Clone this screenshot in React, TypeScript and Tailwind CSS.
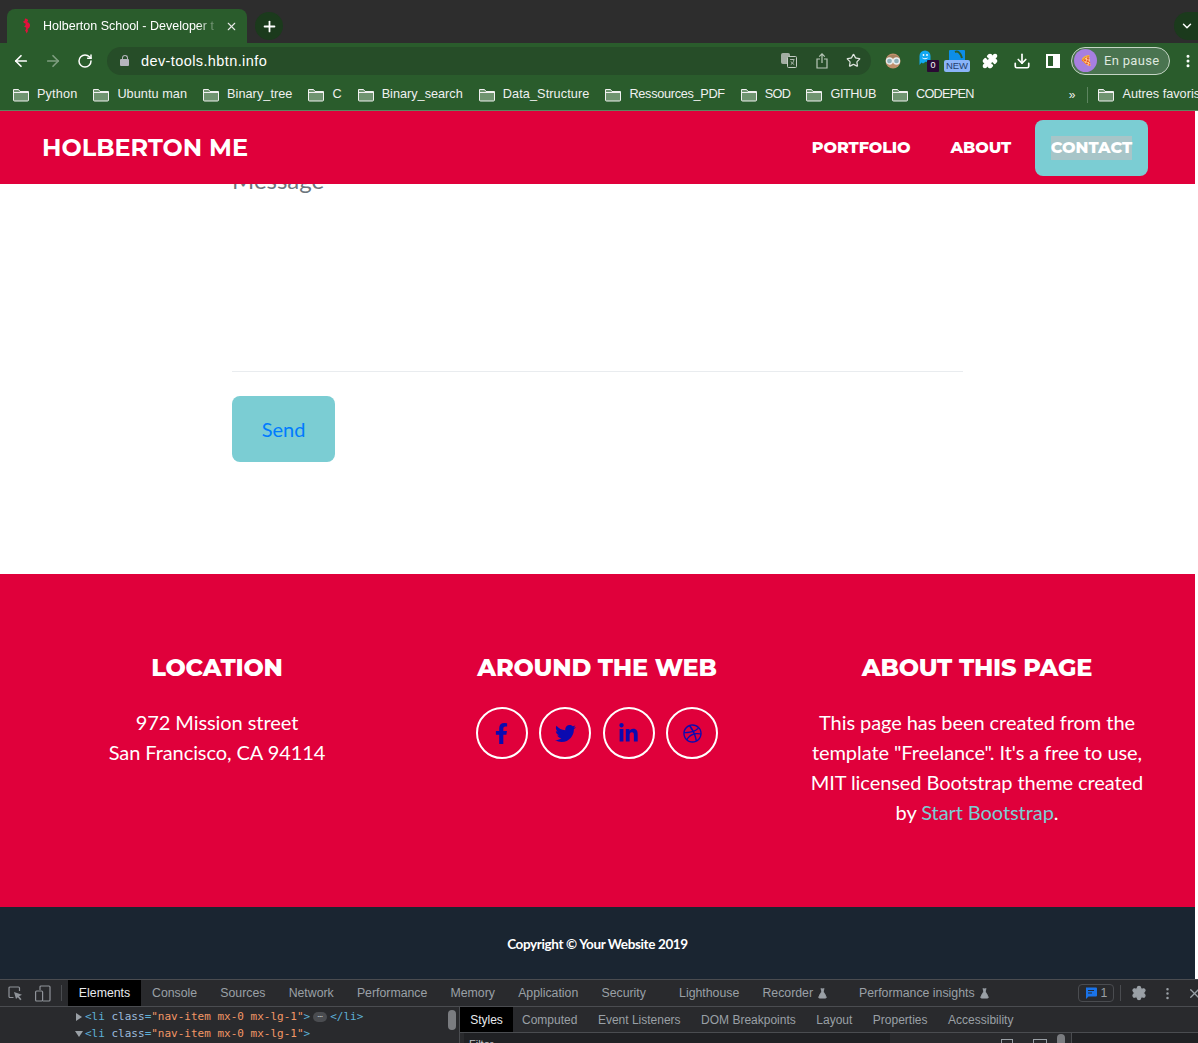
import { ArrowLeft, ArrowRight, RotateCw, Star, Plus, X, ChevronDown, Download, EllipsisVertical, Settings, FlaskConical, Puzzle } from "lucide-react";
import { FaFacebookF, FaTwitter, FaLinkedinIn, FaDribbble } from "react-icons/fa";

const BOOKMARKS = [
  { name: "Python", fit: "tracking-[0.15px]" },
  { name: "Ubuntu man", fit: "tracking-[0.05px]" },
  { name: "Binary_tree", fit: "tracking-[0.05px]" },
  { name: "C", fit: "" },
  { name: "Binary_search", fit: "" },
  { name: "Data_Structure", fit: "tracking-[0.1px]" },
  { name: "Ressources_PDF", fit: "tracking-[-0.3px]" },
  { name: "SOD", fit: "tracking-[-0.6px]" },
  { name: "GITHUB", fit: "tracking-[-0.4px]" },
  { name: "CODEPEN", fit: "tracking-[-0.7px]" },
];
const TOP_TABS = ["Console", "Sources", "Network", "Performance", "Memory", "Application"];
const SIDE_TABS = ["Computed", "Event Listeners", "DOM Breakpoints", "Layout", "Properties", "Accessibility"];
const SOCIAL = [FaFacebookF, FaTwitter, FaLinkedinIn, FaDribbble];

const MONTSERRAT = "font-['Montserrat','Inter',sans-serif] uppercase";
const FOOTER_HEADING = `${MONTSERRAT} font-extrabold text-[24px] leading-[29px] tracking-[-0.2px]`;

function BookmarkFolder() {
  return (
    <svg width="16" height="14" viewBox="0 0 16 14" className="shrink-0">
      <path d="M0.5 12V1.5h5l1.5 2h8.5V12a1 1 0 0 1-1 1h-13a1 1 0 0 1-1-1z" fill="#6f9470" stroke="#f0f0f0" />
      <path d="M0.5 4.5h15" stroke="#f0f0f0" />
    </svg>
  );
}

function Favicon() {
  return (
    <svg width="8" height="16" viewBox="0 0 8 16" className="shrink-0" fill="#e0103b">
      <path d="M2 0.5c2 0 3.5 1 3 2.5L4 4c2 0.5 3.5 2 3 4-0.3 1.500-1.500 2.500-2.500 3 0.800 1.500 0.500 3.500-1.500 4.500 0.500-1 0-2-1-3 1-1 1.500-2 1-3L1 8.500c1-0.500 2-1.500 1.500-3L1 5 0 3.500 1.500 3z" />
    </svg>
  );
}

function TranslateIcon() {
  return (
    <svg width="16" height="15" viewBox="0 0 16 15" className="ml-auto shrink-0">
      <rect x="0.500" y="0.500" width="8" height="10" rx="1" fill="#a3aea3" stroke="#a3aea3" />
      <rect x="6.500" y="3.500" width="9" height="11" rx="1" fill="#2a4d2c" stroke="#c4cdc4" />
      <path d="M9 6.500h4.500M11.200 6v1M9.800 11.500c1.800-1 2.700-2.500 3-4.500M10 8.500c0.600 1.300 1.800 2.300 3.200 3" stroke="#c4cdc4" fill="none" strokeWidth="0.800" />
    </svg>
  );
}

function ShareIcon() {
  return (
    <svg width="12" height="16" viewBox="0 0 12 16" fill="none" stroke="#b9c8b9" strokeWidth="1.200" className="ml-[19px] shrink-0">
      <path d="M6 10V1M3.200 3.600 6 0.900l2.800 2.700" />
      <path d="M4 6H1v9h10V6H8" />
    </svg>
  );
}

function GlassesAvatar() {
  return (
    <svg width="16" height="16" viewBox="0 0 16 16" className="ml-[14px] shrink-0">
      <circle cx="8" cy="8" r="7.500" fill="#c2906c" />
      <path d="M1.500 5c2-4 11-4 13 0z" fill="#a5805e" />
      <circle cx="4.500" cy="8" r="3" fill="#8fb0b8" stroke="#e8eeee" strokeWidth="1.300" />
      <circle cx="11.500" cy="8" r="3" fill="#8fb0b8" stroke="#e8eeee" strokeWidth="1.300" />
    </svg>
  );
}

function GhostBadge() {
  return (
    <div className="relative ml-[18px] h-[22px] w-[20px] shrink-0">
      <svg width="12" height="15" viewBox="0 0 12 15" className="absolute left-0 top-0">
        <path d="M0.500 15V6a5.500 5.500 0 0 1 11 0v6l-2.500 1-2-1.500L4 13.500 2.500 12.500z" fill="#12a8f2" />
        <circle cx="4.500" cy="5" r="0.900" fill="white" />
        <circle cx="8" cy="5" r="0.900" fill="white" />
        <path d="M3.500 8c1.200 1 3.500 1 5 0" stroke="white" fill="none" />
      </svg>
      <span className="absolute left-[8px] top-[10px] flex h-[12px] w-[12px] items-center justify-center rounded-[1px] bg-[#2a0a34] text-[9px] leading-none">0</span>
    </div>
  );
}

function NewBadge() {
  return (
    <div className="relative ml-[5px] h-[22px] w-[26px] shrink-0">
      <svg width="16" height="10" viewBox="0 0 16 10" className="absolute left-[5px] top-0">
        <path d="M1 0h14a1 1 0 0 1 1 1v9H0V1a1 1 0 0 1 1-1z" fill="#0c8ee8" />
        <path d="M6 2c3-1.500 6 1.500 7 6" stroke="#2a5c2c" strokeWidth="2" fill="none" />
      </svg>
      <span className="absolute bottom-0 left-0 h-[12px] w-[26px] rounded-[2px] bg-[#8ab4f8] text-center text-[9.500px] leading-[12px] text-[#23406e]">NEW</span>
    </div>
  );
}

function InspectIcon() {
  return (
    <svg width="15" height="15" viewBox="0 0 15 15" fill="none" className="ml-[8px] shrink-0">
      <path d="M5.500 11.500H2a1 1 0 0 1-1-1V2a1 1 0 0 1 1-1h8.500a1 1 0 0 1 1 1v3" stroke="#8f9399" strokeWidth="1.200" />
      <path d="M6 6l8 2.800-3 1.400 2.500 3-1.300 1-2.400-3L8 13z" fill="#8f9399" />
    </svg>
  );
}

function DeviceIcon() {
  return (
    <svg width="16" height="17" viewBox="0 0 16 17" fill="none" stroke="#8f9399" strokeWidth="1.200" className="ml-[12px] shrink-0">
      <path d="M5 5V2a1 1 0 0 1 1-1h8a1 1 0 0 1 1 1v13a1 1 0 0 1-1 1H8" />
      <rect x="0.600" y="6" width="7" height="10" rx="1" />
    </svg>
  );
}

function IssueIcon() {
  return (
    <svg width="12" height="12" viewBox="0 0 12 12" className="shrink-0">
      <path d="M1 0.500h10a1 1 0 0 1 1 1v7a1 1 0 0 1-1 1H3.500L1 12z" fill="#1a73e8" />
      <path d="M3 3.500h6M3 6h4" stroke="#292a2d" />
    </svg>
  );
}

function Browser() {
  return (
    <div className="font-['Liberation_Sans',sans-serif] text-white">
      <div className="flex h-[43px] items-end bg-[#2d2d2d] pl-[7px]">
        <div className="flex h-[34px] w-[240px] items-center rounded-t-lg bg-[#2a5c2c] pl-[16px]">
          <Favicon />
          <span className="ml-[12px] w-[176px] overflow-hidden whitespace-nowrap text-[12.500px] [mask-image:linear-gradient(to_right,black_88%,transparent)]">Holberton School - Developer t</span>
          <X size={13} className="ml-[6px] shrink-0 text-[#e8e8e8]" />
        </div>
        <div className="mb-[3px] ml-[8px] flex h-[28px] w-[28px] items-center justify-center rounded-full bg-[#1b3a1c]">
          <Plus size={17} strokeWidth={2.500} />
        </div>
        <div className="mb-[3px] ml-auto flex h-[28px] w-[24px] items-center rounded-l-full bg-[#1b3a1c] pl-[6px]">
          <ChevronDown size={14} strokeWidth={2.500} />
        </div>
      </div>

      <div className="flex h-[35px] items-center bg-[#2a5c2c] pl-[12px]">
        <ArrowLeft size={18} strokeWidth={2.250} />
        <ArrowRight size={18} strokeWidth={2.250} className="ml-[14px] text-[#7f9e80]" />
        <RotateCw size={16} strokeWidth={2.250} className="ml-[15px]" />
        <div className="ml-[14px] flex h-[28px] w-[764px] items-center rounded-full bg-[#264d28] pl-[13px] pr-[10px]">
          <div className="flex w-[9px] shrink-0 flex-col items-center">
            <span className="h-[4px] w-[6px] rounded-t-full border border-b-0 border-[#b5b5bd]" />
            <span className="h-[7px] w-[9px] rounded-[1px] bg-[#b5b5bd]" />
          </div>
          <span className="ml-[12px] mt-[2px] text-[14.500px] tracking-[0.4px]">dev-tools.hbtn.info</span>
          <TranslateIcon />
          <ShareIcon />
          <Star size={15} className="ml-[18px] shrink-0 text-[#dde3dd]" />
        </div>
        <GlassesAvatar />
        <GhostBadge />
        <NewBadge />
        <Puzzle size={16} fill="white" className="ml-[12px] shrink-0" />
        <Download size={18} strokeWidth={2.250} className="ml-[15px] shrink-0" />
        <div className="ml-[15px] flex h-[14px] w-[14px] shrink-0 justify-end border-2 border-white"><span className="h-full w-[5px] bg-white" /></div>
        <div className="ml-[11px] flex h-[28px] w-[99px] shrink-0 items-center rounded-full border border-[#c5d5c5] bg-[#4a7450] pl-[2px]">
          <span className="flex h-[23px] w-[23px] items-center justify-center rounded-full bg-[#a77fe0] text-[10px]">🍕</span>
          <span className="ml-[7px] font-['Roboto',sans-serif] text-[13px] tracking-[0.3px] text-[#dfe8df]">En pause</span>
        </div>
        <EllipsisVertical size={16} strokeWidth={2.500} className="ml-[10px] shrink-0" />
      </div>

      <div className="flex h-[33px] items-center overflow-hidden whitespace-nowrap border-b border-[#5d8560] bg-[#2a5c2c] pl-[13px] pt-[2px] text-[12.700px] text-[#f0f0f0]">
        {BOOKMARKS.map((b) => (
          <div key={b.name} className="mr-[16px] flex shrink-0 items-center gap-[8px]">
            <BookmarkFolder />
            <span className={b.fit}>{b.name}</span>
          </div>
        ))}
        <span className="ml-[79px] shrink-0 text-[12px]">»</span>
        <span className="ml-[12px] h-[16px] w-px shrink-0 bg-[#5d8560]" />
        <div className="ml-[10px] flex shrink-0 items-center gap-[8px]">
          <BookmarkFolder />
          <span>Autres favoris</span>
        </div>
      </div>
    </div>
  );
}

function Nav() {
  return (
    <div className="relative z-10 flex h-[73px] w-[1195px] items-center bg-[#e0003b] pl-[42px] pr-[47px] text-white">
      <span className={`${MONTSERRAT} text-[24px] font-bold`}>Holberton Me</span>
      <div className={`${MONTSERRAT} ml-auto flex items-center text-[16px] font-extrabold`}>
        <span className="mr-[40px] tracking-[-0.1px]">Portfolio</span>
        <span className="mr-[24px] tracking-[-0.1px]">About</span>
        <span className="flex h-[56px] w-[113px] items-center justify-center rounded-lg bg-[#7bcdd3]">
          <span className="bg-[#a7c5c8] leading-[24px]">Contact</span>
        </span>
      </div>
    </div>
  );
}

function ContactForm() {
  return (
    <div className="h-[390px] w-[1195px] bg-white pl-[232px] font-['Lato',sans-serif]">
      <div className="-mt-[19px] h-[207px] w-[731px] border-b border-[#e9ecef] text-[24px] leading-[29px] text-[#6c757d]">Message</div>
      <button className="mt-[24px] block h-[66px] w-[103px] rounded-lg bg-[#7bcdd3] text-[20px] text-[#007bff]">Send</button>
    </div>
  );
}

function Footer() {
  return (
    <div className="w-[1195px] font-['Lato',sans-serif] text-white">
      <div className="grid h-[333px] grid-cols-3 bg-[#e0003b] pl-[27px] pr-[28px] pt-[79px] text-center text-[20px] leading-[30px] tracking-[-0.07px]">
        <div>
          <h4 className={FOOTER_HEADING}>Location</h4>
          <p className="mt-[25px]">972 Mission street<br />San Francisco, CA 94114</p>
        </div>
        <div>
          <h4 className={FOOTER_HEADING}>Around the Web</h4>
          <div className="mt-[25px] flex justify-center gap-[11.670px]">
            {SOCIAL.map((Icon, i) => (
              <span key={i} className="flex h-[52px] w-[52px] items-center justify-center rounded-full border-2 border-white text-[#0b0ab0]">
                <Icon size={i === 3 ? 19 : 21} />
              </span>
            ))}
          </div>
        </div>
        <div>
          <h4 className={FOOTER_HEADING}>About this Page</h4>
          <p className="mx-auto mt-[25px] w-[350px]">
            This page has been created from the template "Freelance". It's a free to use, MIT licensed Bootstrap theme created by <span className="text-[#7bcdd3]">Start Bootstrap</span>.
          </p>
        </div>
      </div>
      <div className="flex h-[72px] items-center justify-center bg-[#1a2531] pt-[2px] text-[13.500px] font-bold tracking-[-0.37px]">Copyright © Your Website 2019</div>
    </div>
  );
}

function DevTools() {
  return (
    <div className="h-[64px] overflow-hidden border-t border-[#4a4c50] bg-[#292a2d] font-['Liberation_Sans',sans-serif] text-[12.300px] text-[#9aa0a6]">
      <div className="flex h-[27px] items-center whitespace-nowrap border-b border-[#4a4c50]">
        <InspectIcon />
        <DeviceIcon />
        <span className="ml-[10px] h-[16px] w-px shrink-0 bg-[#4a4c50]" />
        <span className="ml-[6px] flex h-full w-[73px] shrink-0 items-center justify-center bg-black text-[#e8eaed]">Elements</span>
        <div className="ml-[11px] flex gap-[23.200px]">
          {TOP_TABS.map((t) => (
            <span key={t}>{t}</span>
          ))}
          <span className="mr-[10px]">Security</span>
          <span>Lighthouse</span>
          <span className="flex items-center gap-[4px]">Recorder <FlaskConical size={11} fill="#9aa0a6" /></span>
        </div>
        <span className="ml-[31px] flex items-center gap-[4px]">Performance insights <FlaskConical size={11} fill="#9aa0a6" /></span>
        <span className="ml-auto flex h-[18px] w-[36px] shrink-0 items-center justify-center gap-[4px] rounded-sm border border-[#4a4c50]">
          <IssueIcon />1
        </span>
        <span className="ml-[6px] h-[16px] w-px shrink-0 bg-[#4a4c50]" />
        <Settings size={16} fill="#9aa0a6" className="ml-[10px] shrink-0" />
        <EllipsisVertical size={15} className="ml-[13px] shrink-0" />
        <X size={15} className="ml-[12px] -mr-[4px] shrink-0" />
      </div>
      <div className="flex h-[36px]">
        <div className="relative h-full w-[460px] shrink-0 border-r border-[#4a4c50] pl-[76px] pt-px font-['DejaVu_Sans_Mono',monospace] text-[11px] leading-[17px] text-[#5db0d7]">
          <div className="flex items-center whitespace-pre">
            <span className="mr-[3px] h-0 w-0 border-y-[4px] border-l-[6px] border-y-transparent border-l-[#9aa0a6]" />
            <span>&lt;li <span className="text-[#9bbbdc]">class</span>=<span className="text-[#f29766]">"nav-item mx-0 mx-lg-1"</span>&gt;</span>
            <span className="mx-[3px] flex h-[10px] w-[14px] items-center justify-center rounded-full bg-[#4a4c50] text-[8px] leading-none text-[#c0c4c8]">⋯</span>
            <span>&lt;/li&gt;</span>
          </div>
          <div className="flex items-center whitespace-pre">
            <span className="mr-[2px] h-0 w-0 border-x-[4px] border-t-[6px] border-x-transparent border-t-[#9aa0a6] -ml-px" />
            <span>&lt;li <span className="text-[#9bbbdc]">class</span>=<span className="text-[#f29766]">"nav-item mx-0 mx-lg-1"</span>&gt;</span>
          </div>
          <span className="absolute right-[3px] top-[3px] h-[20px] w-[8px] rounded-full bg-[#7a7c80]" />
        </div>
        <div className="min-w-0 flex-1">
          <div className="flex h-[26px] items-center whitespace-nowrap border-b border-[#4a4c50] text-[12px]">
            <span className="flex h-full w-[53px] shrink-0 items-center justify-center bg-black pt-px text-[#e8eaed]">Styles</span>
            <div className="ml-[9px] flex gap-[20.500px] pt-px">
              {SIDE_TABS.map((t) => (
                <span key={t}>{t}</span>
              ))}
            </div>
          </div>
          <div className="flex h-[10px]">
            <div className="ml-[4px] h-full w-[426px] bg-[#202124] pl-[5px] pt-[3px] text-[11px] leading-[16px] text-[#c0c4c8]">Filter</div>
            <div className="ml-auto flex items-start gap-[20px] pt-[6px]">
              <span className="h-[8px] w-[12px] border border-[#9aa0a6]" />
              <span className="h-[8px] w-[14px] border border-[#9aa0a6]" />
            </div>
            <span className="ml-[10px] mr-[6px] mt-px h-[12px] w-[8px] rounded-full bg-[#7a7c80]" />
            <div className="h-full w-[127px] border-l border-[#4a4c50] bg-[#202124]" />
          </div>
        </div>
      </div>
    </div>
  );
}

export default function App() {
  return (
    <div className="flex h-[1043px] w-[1198px] flex-col overflow-hidden bg-white">
      <Browser />
      <Nav />
      <ContactForm />
      <Footer />
      <DevTools />
    </div>
  );
}
